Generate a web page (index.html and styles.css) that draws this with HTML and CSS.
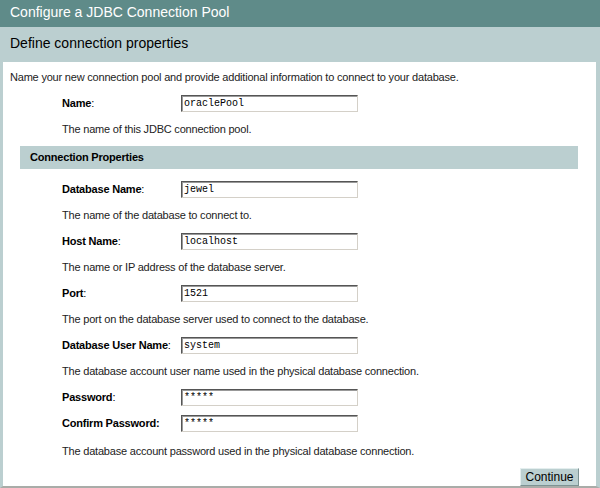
FILE: index.html
```html
<!DOCTYPE html>
<html>
<head>
    <title>Configure a JDBC Connection Pool</title>
    <link rel="stylesheet" href="styles.css">
</head>
<body>
    <div class="page">
        <div class="titlebar">Configure a JDBC Connection Pool</div>
        <div class="subbar">Define connection properties</div>

        <div class="panel">
            <div class="intro">Name your new connection pool and provide additional information to connect to your database.</div>

            <div class="field">
                <label class="lbl"><b>Name</b>:</label>
                <input type="text" class="txt" value="oraclePool">
            </div>
            <div class="help">The name of this JDBC connection pool.</div>

            <div class="section">
                <div class="section-head">Connection Properties</div>

                <div class="section-body">
                    <div class="field">
                        <label class="lbl"><b>Database Name</b>:</label>
                        <input type="text" class="txt" value="jewel">
                    </div>
                    <div class="help">The name of the database to connect to.</div>

                    <div class="field">
                        <label class="lbl"><b>Host Name</b>:</label>
                        <input type="text" class="txt" value="localhost">
                    </div>
                    <div class="help">The name or IP address of the database server.</div>

                    <div class="field">
                        <label class="lbl"><b>Port</b>:</label>
                        <input type="text" class="txt" value="1521">
                    </div>
                    <div class="help">The port on the database server used to connect to the database.</div>

                    <div class="field">
                        <label class="lbl"><b>Database User Name</b>:</label>
                        <input type="text" class="txt" value="system">
                    </div>
                    <div class="help">The database account user name used in the physical database connection.</div>

                    <div class="field">
                        <label class="lbl"><b>Password</b>:</label>
                        <input type="text" class="txt" value="*****">
                    </div>
                    <div class="field">
                        <label class="lbl"><b>Confirm Password:</b></label>
                        <input type="text" class="txt" value="*****">
                    </div>
                    <div class="help help-last">The database account password used in the physical database connection.</div>
                </div>
            </div>

            <div class="actions">
                <button type="button" class="btn">Continue</button>
            </div>
        </div>
    </div>
</body>
</html>
```

FILE: styles.css
```css
body {
    margin: 0;
    font-family: "Liberation Sans", Arial, sans-serif;
    font-size: 11px;
    letter-spacing: -0.2px;
    color: #222;
    background: #fff;
}

.page {
    width: 600px;
    height: 488px;
    overflow: hidden;
}

.titlebar {
    height: 27px;
    line-height: 25px;
    padding-left: 10px;
    background-color: #5f8b89;
    color: #fff;
    font-size: 14px;
    letter-spacing: 0;
}

.subbar {
    height: 35px;
    line-height: 33px;
    padding-left: 10px;
    background-color: #bbcfd0;
    color: #000;
    font-size: 14px;
    letter-spacing: 0;
}

.panel {
    height: 422px;
    padding-top: 2px;
    border-left: 3px solid #bbcfd0;
    border-right: 4px solid #bbcfd0;
    border-bottom: 2px solid #a9aca8;
}

.intro {
    height: 26px;
    line-height: 26px;
    padding-left: 7px;
    white-space: nowrap;
}

.field {
    display: flex;
    align-items: center;
    height: 26px;
    padding-left: 59px;
}

.lbl {
    flex: 0 0 119px;
    white-space: nowrap;
    color: #000;
}

.txt {
    width: 177px;
    height: 17px;
    box-sizing: border-box;
    margin: 0;
    padding: 0 2px;
    font-family: "Liberation Mono", "Courier New", monospace;
    font-size: 10px;
    letter-spacing: 0;
    color: #000;
    border: 1px solid;
    border-color: #555 #d4d0c8 #d4d0c8 #555;
    box-shadow: inset 1px 1px 0 #999;
    background: #fff;
}

.help {
    height: 26px;
    line-height: 26px;
    padding-left: 59px;
    white-space: nowrap;
}

.help-last {
    margin-top: 2px;
}

.section {
    margin-top: 4px;
}

.section-head {
    height: 23px;
    line-height: 23px;
    margin: 0 18px 0 17px;
    padding-left: 10px;
    background-color: #bbcfd0;
    font-weight: bold;
    color: #000;
}

.section-body {
    padding-top: 7px;
}

.actions {
    display: flex;
    justify-content: flex-end;
    padding-right: 17px;
    margin-top: 4px;
}

.btn {
    width: 59px;
    height: 18px;
    padding: 0;
    font-family: "Liberation Sans", Arial, sans-serif;
    font-size: 12px;
    color: #000;
    background-color: #bbcfd0;
    border: 1px solid;
    border-color: #e4eeee #7d9393 #7d9393 #e4eeee;
}
```
